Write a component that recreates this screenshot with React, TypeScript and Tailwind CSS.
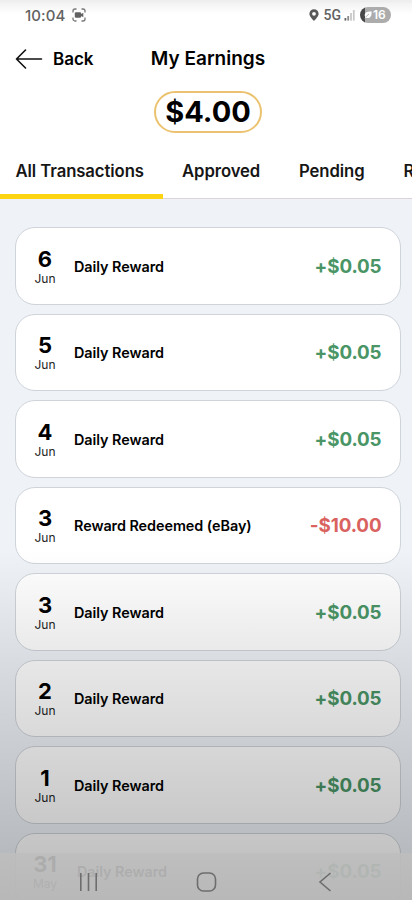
interface Transaction {
  day: string
  month: string
  label: string
  amount: string
}

const transactions: Transaction[] = [
  { day: '6', month: 'Jun', label: 'Daily Reward', amount: '+$0.05' },
  { day: '5', month: 'Jun', label: 'Daily Reward', amount: '+$0.05' },
  { day: '4', month: 'Jun', label: 'Daily Reward', amount: '+$0.05' },
  { day: '3', month: 'Jun', label: 'Reward Redeemed (eBay)', amount: '-$10.00' },
  { day: '3', month: 'Jun', label: 'Daily Reward', amount: '+$0.05' },
  { day: '2', month: 'Jun', label: 'Daily Reward', amount: '+$0.05' },
  { day: '1', month: 'Jun', label: 'Daily Reward', amount: '+$0.05' },
  { day: '31', month: 'May', label: 'Daily Reward', amount: '+$0.05' },
]

// ── Icons ──────────────────────────────────────────────────────────────────

function IconRecording() {
  return (
    <svg className="ml-[7px]" width="14" height="14" viewBox="0 0 14 14" fill="none">
      <path d="M1 4.5V3a2 2 0 0 1 2-2h1.5M9.5 1H11a2 2 0 0 1 2 2v1.5M13 9.5V11a2 2 0 0 1-2 2H9.5M4.5 13H3a2 2 0 0 1-2-2V9.5" stroke="#777" strokeWidth="1.3" />
      <rect x="2.8" y="4.2" width="6.4" height="5.6" rx="1.4" fill="#626262" />
      <path d="M8.5 6.5 11.3 4.8v4.4L8.5 7.5z" fill="#626262" />
    </svg>
  )
}

function IconPin() {
  return (
    <svg width="10" height="12" viewBox="0 0 10 12">
      <path fillRule="evenodd" d="M5 .2A4.6 4.6 0 0 0 .4 4.8C.4 7.8 5 11.9 5 11.9S9.6 7.8 9.6 4.8A4.6 4.6 0 0 0 5 .2Zm0 2.7a1.9 1.9 0 1 1 0 3.8 1.9 1.9 0 0 1 0-3.8Z" fill="#585858" />
    </svg>
  )
}

function IconSignal() {
  return (
    <svg className="ml-[3px]" width="12" height="12" viewBox="0 0 12 12">
      <rect x="0.5" y="9" width="1.8" height="2.6" fill="#666" />
      <rect x="3.3" y="7" width="1.8" height="4.6" fill="#8a8a8a" />
      <rect x="6.1" y="4" width="1.8" height="7.6" fill="#c8c8c8" />
      <rect x="8.9" y="1" width="1.8" height="10.6" fill="#c8c8c8" />
    </svg>
  )
}

function IconLeaf() {
  return (
    <svg width="8" height="8" viewBox="0 0 8 8">
      <path d="M7.6.5C4 .2.9 1 .7 4.1c0 1 .3 1.6.8 2.1L.4 7.5l2-.7C5.8 8 7.9 5.4 7.6.5Z" fill="#fff" />
      <path d="M1.6 6 5 3" stroke="#999" strokeWidth=".7" />
    </svg>
  )
}

function IconBack() {
  return (
    <svg width="28" height="20" viewBox="0 0 28 20" fill="none" stroke="#111" strokeWidth="1.6">
      <path d="M10.5 1 1.5 10l9 9M1.5 10h25" strokeLinecap="round" strokeLinejoin="round" />
    </svg>
  )
}

// ── Sections ───────────────────────────────────────────────────────────────

function StatusBar() {
  return (
    <div className="flex h-[30px] items-center justify-between pl-[25px] pr-[21px] text-[#626262]">
      <div className="flex items-center">
        <span className="text-[15px] font-medium leading-none tracking-[0.1px]">10:04</span>
        <IconRecording />
      </div>
      <div className="flex items-center">
        <IconPin />
        <span className="ml-[5px] font-[Roboto,sans-serif] text-[14px] font-medium leading-none">5G</span>
        <IconSignal />
        <span className="ml-[4px] flex h-4 w-[31px] items-center rounded-full bg-linear-to-r from-[#484848] from-16% to-[#acacac] to-16% pl-1">
          <IconLeaf />
          <span className="ml-px text-[12px] font-semibold leading-none text-white">16</span>
        </span>
      </div>
    </div>
  )
}

function Tabs() {
  return (
    <nav className="flex h-[51px] w-[480px] text-[16.7px] font-semibold leading-[46px] tracking-[-0.08px] text-[#161616]">
      <div className="w-[163px] border-b-[5px] border-[#fdd411] pl-[15.5px]">All Transactions</div>
      <div className="w-[117px] border-b border-[#ddd2d7] pl-[19px]">Approved</div>
      <div className="w-[104px] border-b border-[#ddd2d7] pl-[19px]">Pending</div>
      <div className="flex-1 border-b border-[#ddd2d7] pl-[19.5px]">R</div>
    </nav>
  )
}

function TransactionCard({ day, month, label, amount }: Transaction) {
  return (
    <li className="flex h-[77.5px] shrink-0 items-center rounded-[20px] border-[1.5px] border-[#cfd4da] bg-white pr-[18.5px]">
      <div className="ml-[9px] w-10 pt-[2px] text-center">
        <p className="text-[22px] font-bold leading-[24px] text-black">{day}</p>
        <p className="text-[12px] leading-[16px] text-[#222]">{month}</p>
      </div>
      <p className={`flex-1 pt-[1.5px] text-[14.4px] font-semibold tracking-[-0.05px] text-black ${month === 'May' ? 'ml-[12px]' : 'ml-[9px]'}`}>
        {label}
      </p>
      <p className={`pt-[2px] text-[18.8px] font-bold tracking-[-0.1px] ${amount.startsWith('-') ? 'text-[#d9625f]' : 'text-[#4a9566]'}`}>
        {amount}
      </p>
    </li>
  )
}

function SystemNav() {
  return (
    <div className="absolute inset-x-0 bottom-0 flex h-[47px] bg-linear-to-b from-[#bebebe]/90 to-[#b8b8b8]/95">
      <svg className="ml-[79px] mt-[20px]" width="19" height="18" viewBox="0 0 19 18" stroke="#6d6d6d" strokeWidth="1.6">
        <path d="M1.8 0v18M9.5 0v18M17.2 0v18" />
      </svg>
      <svg className="ml-[98px] mt-[19px]" width="21" height="20" viewBox="0 0 21 20" fill="none" stroke="#6d6d6d" strokeWidth="1.6">
        <rect x="1.5" y="1" width="18" height="18" rx="6" />
      </svg>
      <svg className="ml-[101px] mt-[19px]" width="14" height="20" viewBox="0 0 14 20" fill="none" stroke="#6d6d6d" strokeWidth="1.6">
        <path d="M12.5 1 2 10l10.5 9" />
      </svg>
    </div>
  )
}

export default function App() {
  return (
    <div className="relative flex h-[900px] w-[412px] flex-col overflow-hidden bg-[#eff3f8] font-[Inter,sans-serif]">
      <header className="h-[199px] shrink-0 bg-linear-to-b from-[#eeeeee] from-[2px] via-[#f3f3f3] via-[3px] to-white to-[14px]">
        <StatusBar />
        <div className="grid h-[57px] grid-cols-[1fr_auto_1fr] items-center pl-[15px] pt-px text-black">
          <div className="flex items-center gap-[10px]">
            <IconBack />
            <span className="pt-px text-[17px] font-semibold">Back</span>
          </div>
          <h1 className="pr-[11px] text-[19px] font-semibold">My Earnings</h1>
        </div>
        <div className="ml-[154px] mt-[4px] flex h-[42px] w-[108px] items-center justify-center rounded-full border-2 border-[#ebc370] text-[29px] font-bold text-black">
          $4.00
        </div>
        <div className="mt-[15px]">
          <Tabs />
        </div>
      </header>

      <ul className="flex flex-col gap-[9px] pl-[15px] pr-[11px] pt-[28px]">
        {transactions.map((t, i) => (
          <TransactionCard key={i} {...t} />
        ))}
      </ul>

      {/* bottom shade behind the system navigation */}
      <div className="pointer-events-none absolute inset-x-0 bottom-0 h-[350px] bg-linear-to-b from-black/0 via-black/10 via-34% to-black/27" />
      <SystemNav />
    </div>
  )
}
